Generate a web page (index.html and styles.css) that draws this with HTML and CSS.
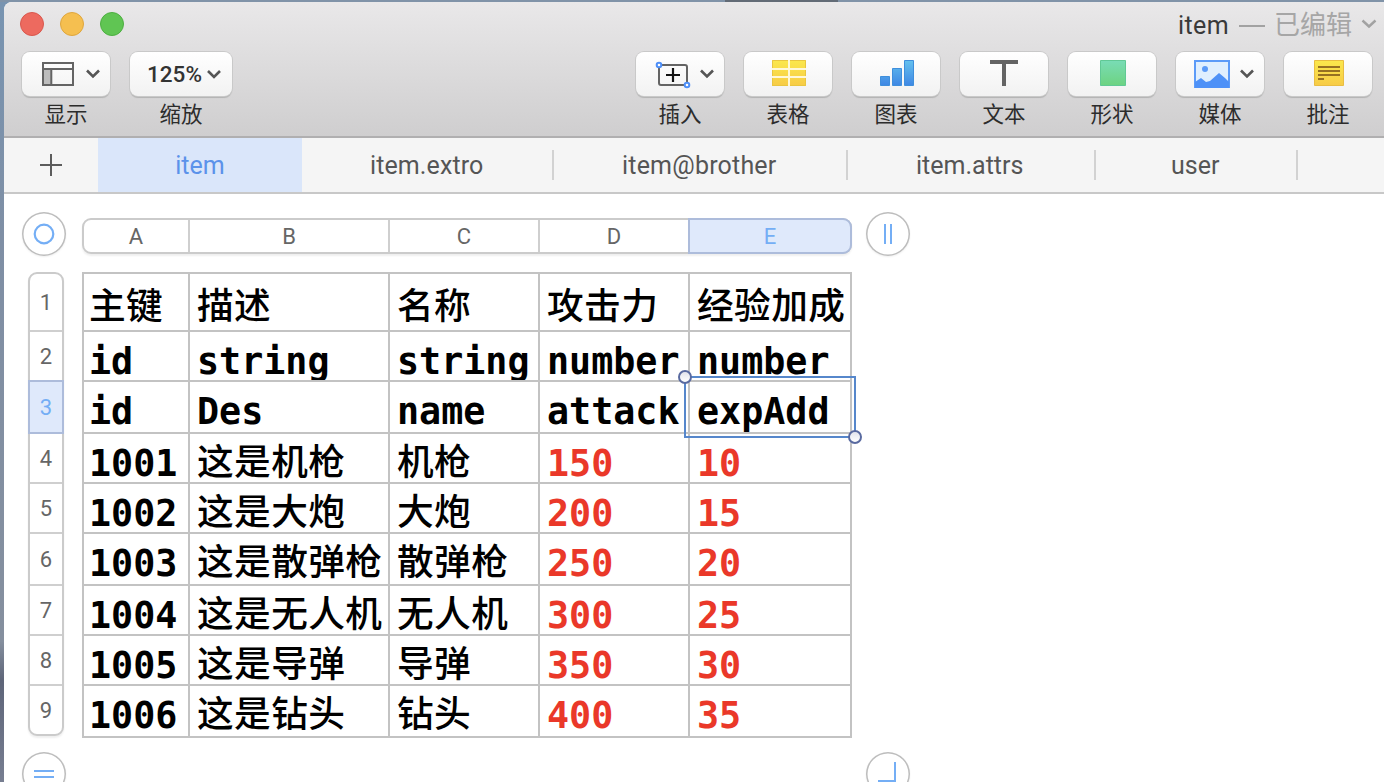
FILE: index.html
```html
<!DOCTYPE html>
<html lang="zh-CN">
<head>
<meta charset="utf-8">
<title>item</title>
<link rel="stylesheet" href="styles.css">
</head>
<body>
<div class="desktop">
<div class="window">
  <header class="chrome">
    <div class="titlebar">
      <div class="lights"><i class="light red"></i><i class="light yellow"></i><i class="light green"></i></div>
      <div class="title"><span class="doc-name">item</span><span class="dash"></span><span class="edited">已编辑</span>
        <svg width="16" height="10" viewBox="0 0 16 10"><path d="M1.5 1.5 8 7.5l6.5-6" fill="none" stroke="#a2a2a2" stroke-width="2.4"/></svg>
      </div>
    </div>
    <div class="toolbar">
      <div class="tool"><div class="button">
        <svg width="88" height="44" viewBox="0 0 88 44"><rect x="22" y="17" width="7" height="17" fill="#bdbdbd"/><path d="M21 11h30v22H21zM21 17h30M29.300 17v16" fill="none" stroke="#646464" stroke-width="2"/><path d="M65 18.500l6 6 6-6" fill="none" stroke="#555" stroke-width="2.600"/></svg>
      </div><span class="label">显示</span></div>
      <div class="tool zoom"><div class="button"><span class="percent">125%</span>
        <svg width="16" height="12" viewBox="0 0 16 12"><path d="M2 3l6 6 6-6" fill="none" stroke="#555" stroke-width="2.600"/></svg>
      </div><span class="label">缩放</span></div>
      <div class="spacer"></div>
      <div class="tool"><div class="button">
        <svg width="88" height="44" viewBox="0 0 88 44"><rect x="23" y="13" width="28" height="20" rx="2" fill="none" stroke="#646464" stroke-width="2"/><path d="M37 16v14M30 23h14" stroke="#111" stroke-width="2.200"/><circle cx="23" cy="13" r="2.300" fill="#fff" stroke="#4e8ff8" stroke-width="2"/><circle cx="51" cy="33" r="2.300" fill="#fff" stroke="#4e8ff8" stroke-width="2"/><path d="M65 18.500l6 6 6-6" fill="none" stroke="#555" stroke-width="2.600"/></svg>
      </div><span class="label">插入</span></div>
      <div class="tool"><div class="button">
        <svg width="88" height="44" viewBox="0 0 88 44"><defs><linearGradient id="gold" x1="0" y1="0" x2="0" y2="1"><stop stop-color="#fbe84c"/><stop offset="1" stop-color="#f7cb46"/></linearGradient></defs><rect x="28" y="8" width="34" height="26" fill="url(#gold)"/><path d="M28.500 8.500h33v25h-33z" fill="none" stroke="#e9c640"/><path d="M28 17h34M28 25h34M45 8v26" stroke="#fff8d8" stroke-width="2"/></svg>
      </div><span class="label">表格</span></div>
      <div class="tool"><div class="button">
        <svg width="88" height="44" viewBox="0 0 88 44"><defs><linearGradient id="bars" gradientUnits="userSpaceOnUse" x1="0" y1="8" x2="0" y2="34"><stop stop-color="#65c2ee"/><stop offset="1" stop-color="#3e86e4"/></linearGradient></defs><path d="M28.500 24.500h9v9h-9zM40.500 16.500h9v17h-9zM52.500 8.500h9v25h-9z" fill="url(#bars)" stroke="#3f8fdc"/></svg>
      </div><span class="label">图表</span></div>
      <div class="tool"><div class="button">
        <svg width="88" height="44" viewBox="0 0 88 44"><path d="M30 8h28v4H46v22h-4V12H30z" fill="#646464"/></svg>
      </div><span class="label">文本</span></div>
      <div class="tool"><div class="button">
        <svg width="88" height="44" viewBox="0 0 88 44"><defs><linearGradient id="mint" x1="0" y1="0" x2="0" y2="1"><stop stop-color="#79dcb6"/><stop offset="1" stop-color="#6dd381"/></linearGradient></defs><path d="M32.500 8.500h25v25h-25z" fill="url(#mint)" stroke="#61c995"/></svg>
      </div><span class="label">形状</span></div>
      <div class="tool"><div class="button">
        <svg width="88" height="44" viewBox="0 0 88 44"><path d="M19 9h34v26H19z" fill="#e0effe" stroke="#5c9bf8" stroke-width="2"/><circle cx="29" cy="17" r="3" fill="#5c9bf8"/><path d="M19 30l6-4 5 4 4-1 9-8 6 5 4 4v6H19z" fill="#4e91f7"/><path d="M65 18.500l6 6 6-6" fill="none" stroke="#555" stroke-width="2.600"/></svg>
      </div><span class="label">媒体</span></div>
      <div class="tool"><div class="button">
        <svg width="88" height="44" viewBox="0 0 88 44"><path d="M30.500 8.500h29v25h-29z" fill="url(#gold)" stroke="#e9bd42"/><path d="M34 15h22M34 19h22M34 23h22M34 27h6" stroke="#967022" stroke-width="1.800"/></svg>
      </div><span class="label">批注</span></div>
    </div>
  </header>
  <nav class="tabs">
    <div class="add"><svg width="22" height="22" viewBox="0 0 22 22"><path d="M11 0v22M0 11h22" stroke="#5c5c5c" stroke-width="2"/></svg></div>
    <div class="tab active">item</div>
    <div class="tab t2">item.extro</div>
    <div class="tab t3">item@brother</div>
    <div class="tab t4">item.attrs</div>
    <div class="tab t5">user</div>
  </nav>
  <main class="sheet">
    <div class="knob"><svg width="44" height="44" viewBox="0 0 44 44"><circle cx="22" cy="22" r="9.300" fill="none" stroke="#74aef5" stroke-width="2.200"/></svg></div>
    <div class="cols"><span>A</span><span>B</span><span>C</span><span>D</span><span class="sel">E</span></div>
    <div class="knob"><svg width="44" height="44" viewBox="0 0 44 44"><path d="M19 12v20M25 12v20" stroke="#74aef5" stroke-width="2"/></svg></div>

    <div class="rows"><span>1</span><span>2</span><span class="sel">3</span><span>4</span><span>5</span><span>6</span><span>7</span><span>8</span><span>9</span></div>
    <div class="table">
      <div class="cell key cjk head">主键</div><div class="cell cjk head">描述</div><div class="cell cjk head">名称</div><div class="cell cjk head">攻击力</div><div class="cell cjk head">经验加成</div>
      <div class="cell key">id</div><div class="cell clip">string</div><div class="cell clip">string</div><div class="cell">number</div><div class="cell">number</div>
      <div class="cell key">id</div><div class="cell">Des</div><div class="cell">name</div><div class="cell">attack</div><div class="cell">expAdd</div>
      <div class="cell key">1001</div><div class="cell cjk">这是机枪</div><div class="cell cjk">机枪</div><div class="cell num">150</div><div class="cell num">10</div>
      <div class="cell key">1002</div><div class="cell cjk">这是大炮</div><div class="cell cjk">大炮</div><div class="cell num">200</div><div class="cell num">15</div>
      <div class="cell key">1003</div><div class="cell cjk">这是散弹枪</div><div class="cell cjk">散弹枪</div><div class="cell num">250</div><div class="cell num">20</div>
      <div class="cell key">1004</div><div class="cell cjk">这是无人机</div><div class="cell cjk">无人机</div><div class="cell num">300</div><div class="cell num">25</div>
      <div class="cell key">1005</div><div class="cell cjk">这是导弹</div><div class="cell cjk">导弹</div><div class="cell num">350</div><div class="cell num">30</div>
      <div class="cell key">1006</div><div class="cell cjk">这是钻头</div><div class="cell cjk">钻头</div><div class="cell num">400</div><div class="cell num">35</div>
      <div class="selection"><i class="handle start"></i><i class="handle end"></i></div>
    </div>
    <div></div>

    <div class="knob"><svg width="44" height="44" viewBox="0 0 44 44"><path d="M12 19h20M12 25h20" stroke="#74aef5" stroke-width="2"/></svg></div>
    <div></div>
    <div class="knob"><svg width="44" height="44" viewBox="0 0 44 44"><path d="M12 29h17V10" fill="none" stroke="#74aef5" stroke-width="2"/></svg></div>
  </main>
</div>
</div>
</body>
</html>
```
FILE: styles.css
```css
* { box-sizing: border-box; }
body {
  margin: 0;
  height: 782px;
  overflow: hidden;
  font-family: Roboto, "Noto Sans CJK SC", sans-serif;
}
svg { display: block; }
.desktop {
  height: 782px;
  padding: 2px 0 0 4px;
  background:
    linear-gradient(#626b76, #626b76) 725px 0 / 113px 2px no-repeat,
    linear-gradient(#8093a8, #8093a8) 0 0 / 100% 2px no-repeat,
    linear-gradient(#7894b1, #7f8fa5 30%, #858f9e 82%, #5e6579 87%, #777e91);
}
.window {
  height: 780px;
  background: #fff;
  border-radius: 8px 0 0 0;
  overflow: hidden;
}
.chrome {
  height: 136px;
  background: linear-gradient(#e9e8e9, #cfcecf);
  border-bottom: 2px solid #b0afb0;
}
.titlebar {
  display: flex;
  justify-content: space-between;
  align-items: center;
  height: 46px;
  padding: 0 7px 2px 16px;
}
.lights { display: flex; gap: 16px; }
.light { width: 24px; height: 24px; border-radius: 50%; border: 1px solid; }
.red { background: #ed6a5f; border-color: #d9574d; }
.yellow { background: #f5bf50; border-color: #dfa63d; }
.green { background: #60c553; border-color: #4daf41; }
.title { display: flex; align-items: center; padding-top: 2px; font-size: 25px; color: #393939; letter-spacing: .4px; }
.title svg { margin-bottom: 2px; }
.dash { width: 26px; height: 2px; margin: 2px 9px 0 10px; background: #a2a2a2; }
.edited { font-size: 26px; letter-spacing: 0; color: #a6a6a6; margin-right: 9px; line-height: 30px; }
.toolbar { display: flex; gap: 20px; padding: 4px 12px 0 18px; }
.tool { width: 88px; }
.zoom { width: 102px; }
.spacer { width: 364px; }
.button {
  display: flex;
  align-items: center;
  justify-content: center;
  height: 44px;
  border-radius: 8px;
  background: linear-gradient(#fff, #f2f2f2);
  box-shadow: 0 0 0 1px #c9c9c9, 0 2px 1px #b2b2b2;
}
.zoom .button { gap: 4px; padding-left: 7px; }
.percent { font-size: 22.5px; font-weight: 500; color: #333; }
.label { display: block; text-align: center; font-size: 21.5px; line-height: 30px; margin-top: 4px; color: #2c2c2c; }
.tabs {
  display: flex;
  height: 56px;
  background: #f5f5f5;
  border-bottom: 2px solid #c8c8c8;
  font-size: 25px;
  color: #555;
}
.add { width: 94px; display: flex; align-items: center; justify-content: center; }
.tab { display: flex; align-items: center; justify-content: center; }
.tab:not(.active)::after { content: ""; width: 2px; height: 30px; margin-left: auto; background: #d2d2d2; }
.active { width: 204px; background: #dae6fa; color: #5b92ea; }
.t2 { width: 252px; padding-left: 68px; letter-spacing: .1px; }
.t3 { width: 294px; padding-left: 68px; letter-spacing: .2px; }
.t4 { width: 248px; padding-left: 68px; }
.t5 { width: 202px; padding-left: 75px; }
.sheet {
  display: grid;
  grid-template-columns: 44px 768px 44px;
  grid-template-rows: 44px 464px 44px;
  gap: 16px;
  padding: 18px 0 0 18px;
}
.knob { width: 44px; height: 44px; border-radius: 50%; box-shadow: inset 0 0 0 1.500px #bdbdbd, 0 1px 2px #0001; }
.cols, .rows {
  display: grid;
  border: 2px solid #cbcbcb;
  border-radius: 9px;
  background: #cfcfcf;
  gap: 2px;
  font-size: 22px;
  color: #666;
  box-shadow: 0 2px 2px #0001;
}
.cols { width: 770px; height: 36px; margin-top: 6px; grid-template-columns: 104px 198px 148px 148px 160px; }
.rows { width: 36px; height: 464px; margin-left: 6px; grid-template-rows: 56px 48px 50px 48px 48px 50px 48px 48px 48px; }
.cols span, .rows span { display: flex; align-items: center; justify-content: center; background: #fff; }
.cols span:first-child { border-radius: 7px 0 0 7px; }
.rows span:first-child { border-radius: 7px 7px 0 0; }
.rows span:last-child { border-radius: 0 0 7px 7px; }
.cols .sel, .rows .sel { background: #dfe9fb; color: #74aef5; box-shadow: 0 0 0 2px #adbcdb; z-index: 1; }
.cols .sel { border-radius: 0 7px 7px 0; }
.table {
  position: relative;
  display: grid;
  width: 770px;
  height: 466px;
  grid-template-columns: 104px 198px 148px 148px 160px;
  grid-template-rows: 56px 48px 50px 48px 48px 50px 48px 48px 50px;
  gap: 2px;
  padding: 2px;
  background: #c3c3c3;
  font: bold 36.700px "DejaVu Sans Mono", "Noto Sans CJK SC", monospace;
}
.cell { background: #fff; padding: 12px 0 0 7px; line-height: 36px; white-space: nowrap; color: #000; min-width: 0; min-height: 0; }
.key { padding-left: 5px; }
.clip { overflow: hidden; }
.cjk { font-family: "Noto Sans CJK SC", sans-serif; font-weight: 500; padding-top: 7px; letter-spacing: .4px; }
.head { padding-top: 11px; }
.num { color: #ea3829; }
.selection { position: absolute; left: 602px; top: 104px; width: 172px; height: 62px; border: 2px solid #5687cb; }
.handle { position: absolute; width: 14px; height: 14px; border: 2px solid #596aa0; border-radius: 50%; background: linear-gradient(#e2e4ec, #fff); }
.start { left: -8px; top: -8px; }
.end { right: -8px; bottom: -8px; }
```
